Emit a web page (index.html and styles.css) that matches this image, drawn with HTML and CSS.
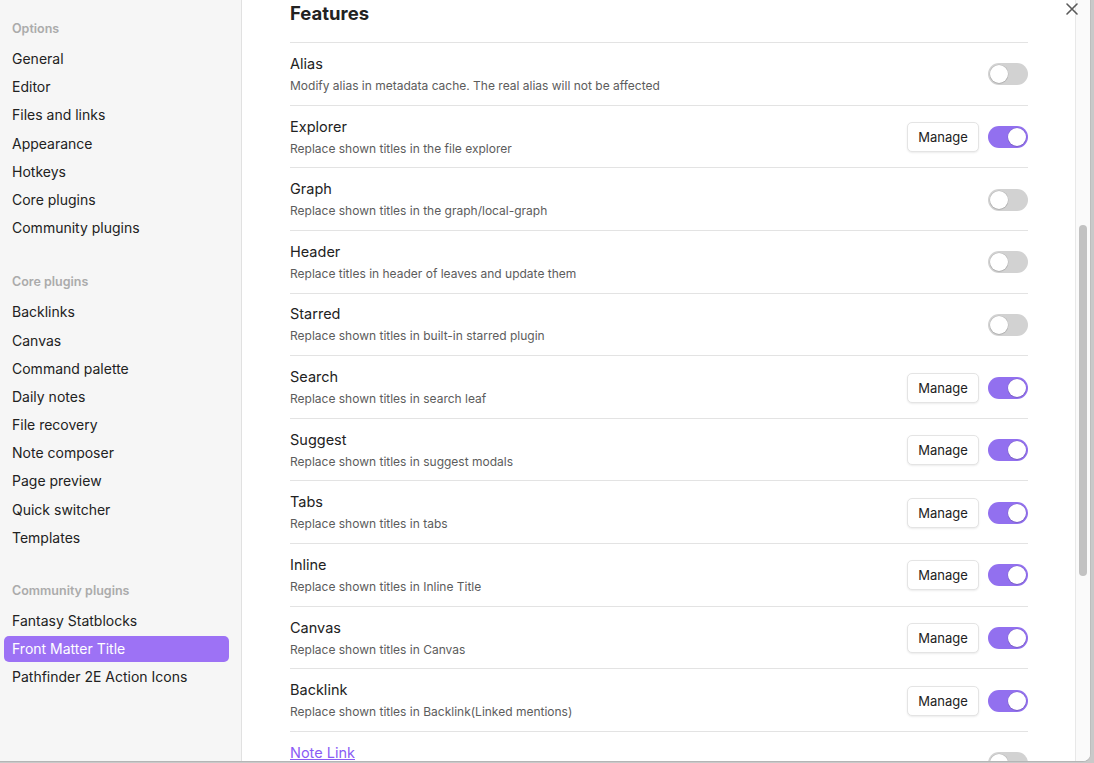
FILE: index.html
```html
<!DOCTYPE html>
<html>
<head>
<meta charset="utf-8">
<link rel="stylesheet" href="styles.css">
</head>
<body>
<div class="modal">
  <nav class="sidebar">
    <div class="nav-group">
      <div class="nav-header">Options</div>
      <div class="nav-item">General</div>
      <div class="nav-item">Editor</div>
      <div class="nav-item">Files and links</div>
      <div class="nav-item">Appearance</div>
      <div class="nav-item">Hotkeys</div>
      <div class="nav-item">Core plugins</div>
      <div class="nav-item">Community plugins</div>
    </div>
    <div class="nav-group">
      <div class="nav-header">Core plugins</div>
      <div class="nav-item">Backlinks</div>
      <div class="nav-item">Canvas</div>
      <div class="nav-item">Command palette</div>
      <div class="nav-item">Daily notes</div>
      <div class="nav-item">File recovery</div>
      <div class="nav-item">Note composer</div>
      <div class="nav-item">Page preview</div>
      <div class="nav-item">Quick switcher</div>
      <div class="nav-item">Templates</div>
    </div>
    <div class="nav-group">
      <div class="nav-header">Community plugins</div>
      <div class="nav-item">Fantasy Statblocks</div>
      <div class="nav-item active">Front Matter Title</div>
      <div class="nav-item">Pathfinder 2E Action Icons</div>
    </div>
  </nav>
  <div class="content-wrap">
    <main class="content">
      <h3 class="heading">Features</h3>
      <div class="setting">
        <div class="info"><div class="name">Alias</div><div class="desc">Modify alias in metadata cache. The real alias will not be affected</div></div>
        <div class="control"><div class="toggle"></div></div>
      </div>
      <div class="setting">
        <div class="info"><div class="name">Explorer</div><div class="desc">Replace shown titles in the file explorer</div></div>
        <div class="control"><button class="btn">Manage</button><div class="toggle on"></div></div>
      </div>
      <div class="setting">
        <div class="info"><div class="name">Graph</div><div class="desc">Replace shown titles in the graph/local-graph</div></div>
        <div class="control"><div class="toggle"></div></div>
      </div>
      <div class="setting">
        <div class="info"><div class="name">Header</div><div class="desc">Replace titles in header of leaves and update them</div></div>
        <div class="control"><div class="toggle"></div></div>
      </div>
      <div class="setting">
        <div class="info"><div class="name">Starred</div><div class="desc">Replace shown titles in built-in starred plugin</div></div>
        <div class="control"><div class="toggle"></div></div>
      </div>
      <div class="setting">
        <div class="info"><div class="name">Search</div><div class="desc">Replace shown titles in search leaf</div></div>
        <div class="control"><button class="btn">Manage</button><div class="toggle on"></div></div>
      </div>
      <div class="setting">
        <div class="info"><div class="name">Suggest</div><div class="desc">Replace shown titles in suggest modals</div></div>
        <div class="control"><button class="btn">Manage</button><div class="toggle on"></div></div>
      </div>
      <div class="setting">
        <div class="info"><div class="name">Tabs</div><div class="desc">Replace shown titles in tabs</div></div>
        <div class="control"><button class="btn">Manage</button><div class="toggle on"></div></div>
      </div>
      <div class="setting">
        <div class="info"><div class="name">Inline</div><div class="desc">Replace shown titles in Inline Title</div></div>
        <div class="control"><button class="btn">Manage</button><div class="toggle on"></div></div>
      </div>
      <div class="setting">
        <div class="info"><div class="name">Canvas</div><div class="desc">Replace shown titles in Canvas</div></div>
        <div class="control"><button class="btn">Manage</button><div class="toggle on"></div></div>
      </div>
      <div class="setting">
        <div class="info"><div class="name">Backlink</div><div class="desc">Replace shown titles in Backlink(Linked mentions)</div></div>
        <div class="control"><button class="btn">Manage</button><div class="toggle on"></div></div>
      </div>
      <div class="setting last">
        <div class="info"><div class="name"><a class="link" href="#">Note Link</a></div></div>
        <div class="control"><div class="toggle"></div></div>
      </div>
    </main>
    <div class="scrollbar"><div class="thumb"></div></div>
    <div class="close" aria-label="Close">
      <svg width="14" height="14" viewBox="0 0 14 14"><path d="M2 2 L12 12 M12 2 L2 12" stroke="#5a5a5a" stroke-width="1.6" stroke-linecap="round" fill="none"/></svg>
    </div>
  </div>
</div>
</body>
</html>
```
FILE: styles.css
```css
* { box-sizing: border-box; }
html, body { margin: 0; padding: 0; }
body {
  width: 1094px;
  height: 763px;
  overflow: hidden;
  background: #c9c9c9;
  font-family: Inter, "Noto Sans", "Liberation Sans", sans-serif;
  color: #222;
}
.modal {
  width: 1091px;
  height: 762px;
  display: flex;
  background: #fff;
  border-right: 1px solid #bdbdbd;
  border-bottom: 1px solid #b5b5b5;
  border-bottom-right-radius: 8px;
  overflow: hidden;
}
.sidebar {
  width: 242px;
  flex: none;
  background: #f6f6f6;
  border-right: 1px solid #e1e1e1;
  padding: 18px 12px 0 4px;
}
.nav-group { margin-bottom: 30px; }
.nav-group + .nav-group { margin-bottom: 28.5px; }
.nav-header {
  font-size: 12.5px;
  font-weight: 600;
  color: #ababab;
  padding-left: 8px;
  height: 22px;
  line-height: 22px;
  margin-bottom: 6px;
}
.nav-item {
  height: 26.2px;
  line-height: 26px;
  margin-bottom: 2px;
  padding-left: 8px;
  font-size: 14px;
  color: #222;
  border-radius: 5px;
}
.nav-item.active {
  background: #9d72f5;
  color: #fff;
}
.content-wrap {
  flex: 1;
  display: flex;
  position: relative;
  min-width: 0;
}
.content {
  flex: 1;
  padding: 0 47px 0 48px;
  overflow: hidden;
}
.heading {
  margin: 0 0 16px;
  font-size: 18.5px;
  font-weight: 700;
  line-height: 26px;
  color: #222;
}
.setting {
  display: flex;
  align-items: center;
  border-top: 1px solid #e3e3e3;
  padding: 10.9px 0 9.74px;
}
.info { flex: 1; }
.setting.last .info { min-height: 41px; }
.name {
  font-size: 14.5px;
  line-height: 20px;
  color: #222;
}
.desc {
  margin-top: 3px;
  font-size: 12px;
  line-height: 18px;
  color: #5c5c5c;
}
.control {
  display: flex;
  align-items: center;
  gap: 9px;
}
.btn {
  height: 30px;
  width: 72px;
  padding: 0;
  font-family: inherit;
  font-size: 13px;
  color: #222;
  background: #fff;
  border: 1px solid #e4e4e4;
  border-radius: 5px;
  box-shadow: 0 1px 2px rgba(0,0,0,0.08);
}
.toggle {
  width: 40px;
  height: 22px;
  border-radius: 11px;
  background: #d2d2d2;
  padding: 2px;
  display: flex;
  justify-content: flex-start;
}
.toggle::after {
  content: "";
  width: 18px;
  height: 18px;
  border-radius: 50%;
  background: #fff;
  box-shadow: 0 0 0 0.5px rgba(0,0,0,0.12), 0 1px 1px rgba(0,0,0,0.1);
}
.toggle.on {
  background: #9270ef;
  justify-content: flex-end;
}
.link {
  color: #8a5cf5;
  text-decoration: underline;
}
.scrollbar {
  width: 15px;
  flex: none;
  background: #fafafa;
  border-left: 1px solid #e8e8e8;
  padding: 225px 3px 0 3px;
}
.thumb {
  width: 8px;
  height: 351px;
  border-radius: 4px;
  background: #c2c2c2;
}
.close {
  position: absolute;
  top: 0;
  right: 11px;
  width: 14px;
  height: 14px;
}
```
